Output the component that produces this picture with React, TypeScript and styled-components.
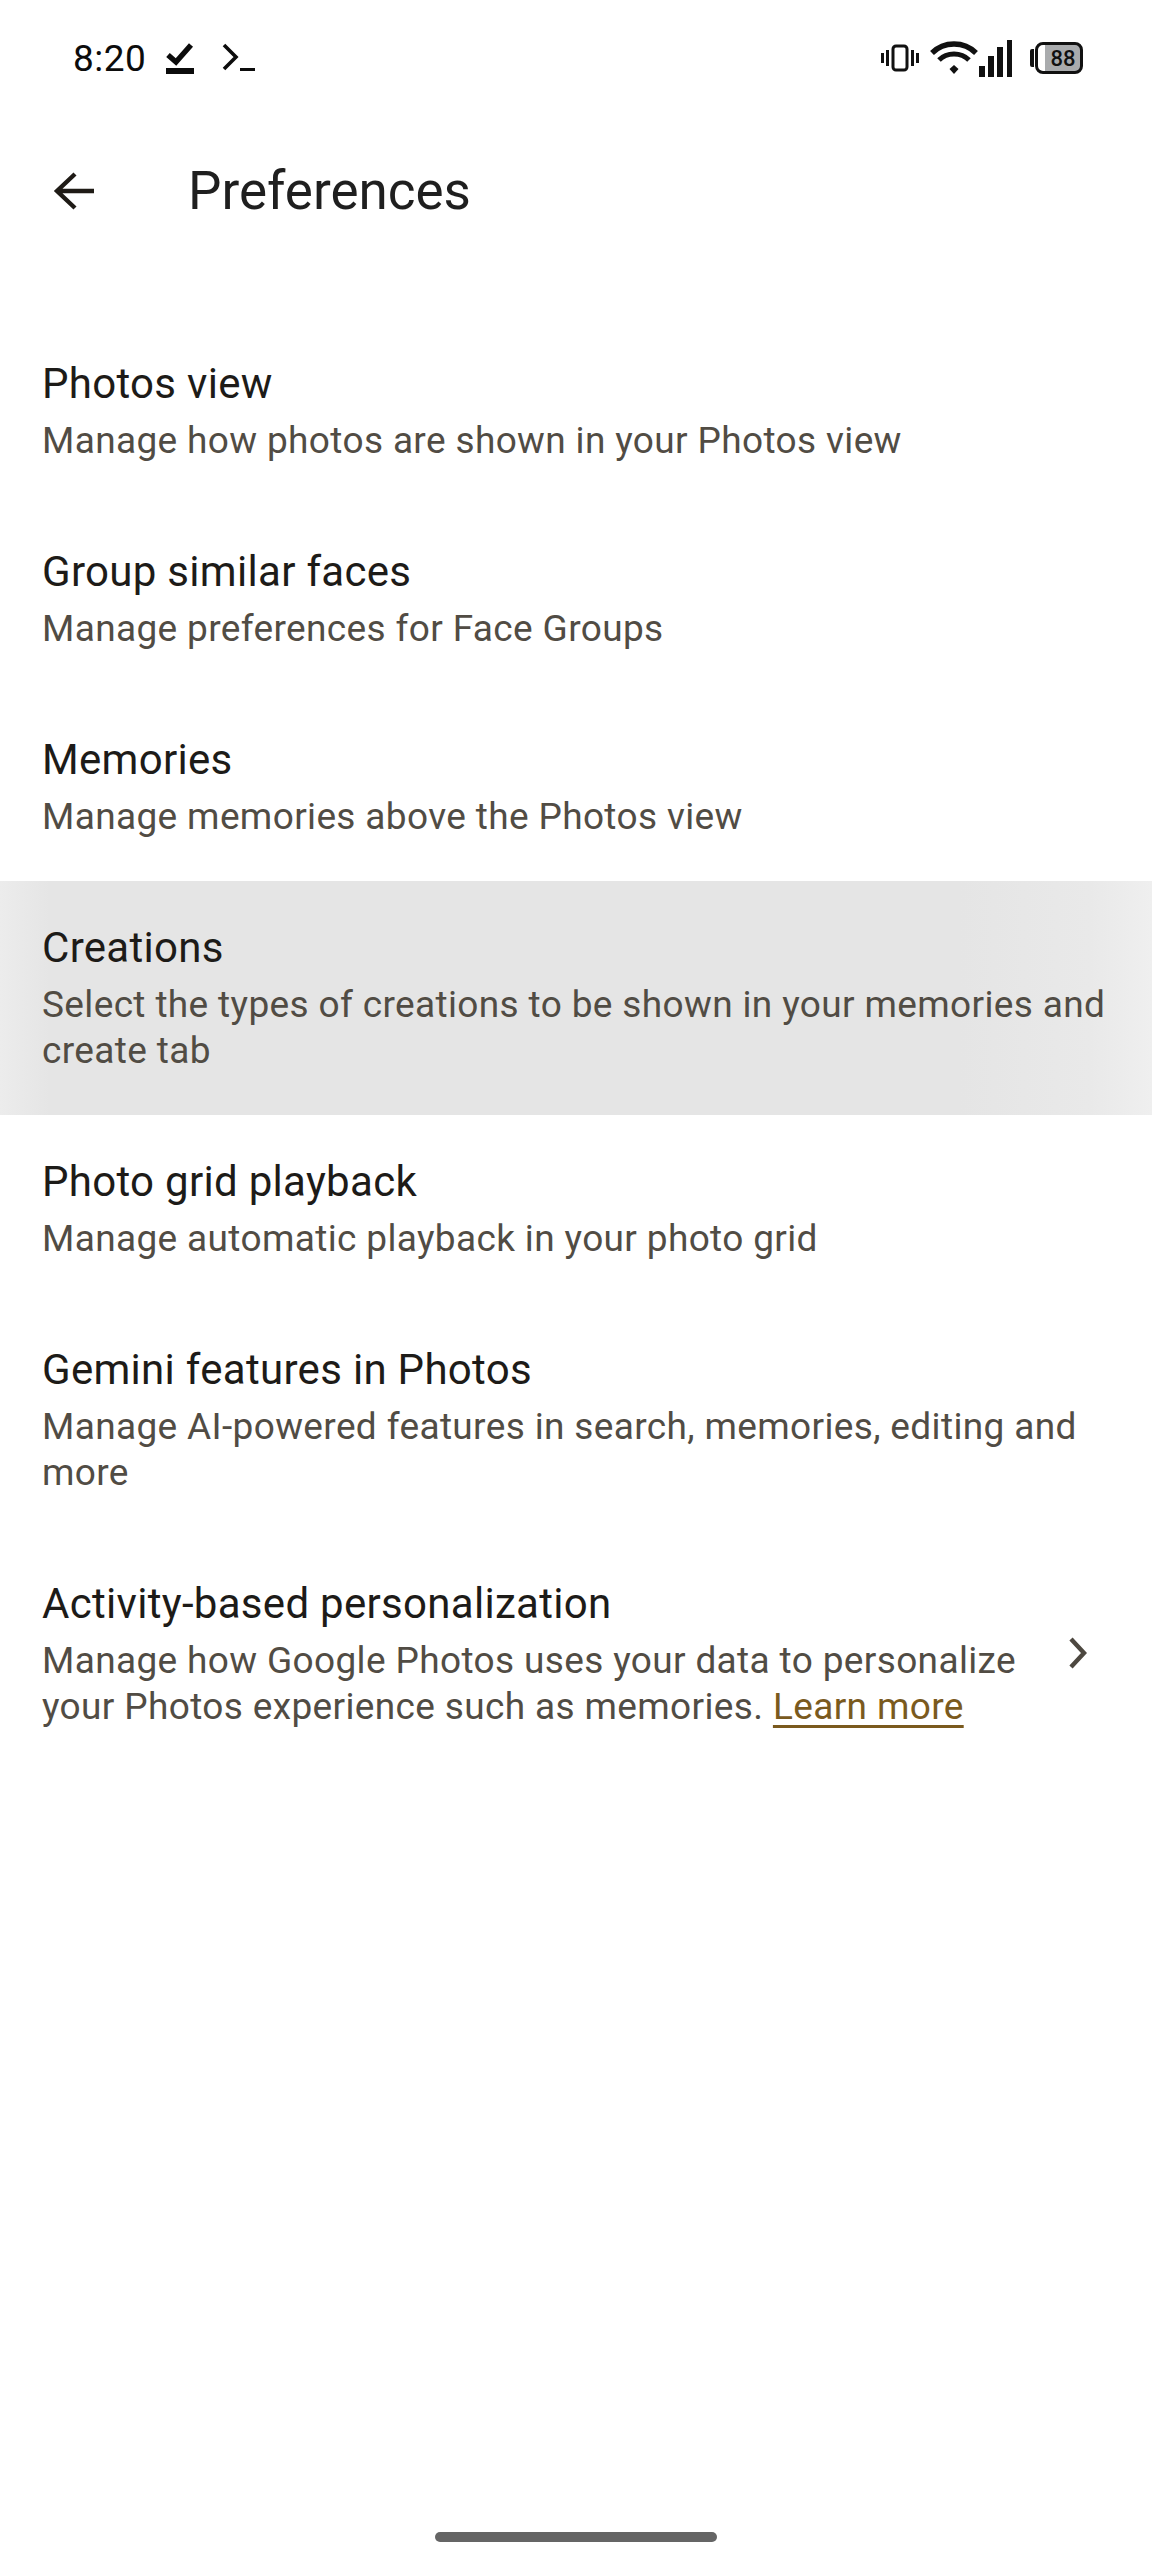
import React from 'react';
import styled, { createGlobalStyle } from 'styled-components';

const GlobalStyle = createGlobalStyle`
    html, body {
        margin: 0;
        padding: 0;
        background: #fff;
    }
`;

const Page = styled.div`
    width: 1152px;
    height: 2560px;
    display: flex;
    flex-direction: column;
    background: #fff;
    font-family: Roboto, "Noto Sans", sans-serif;
    overflow: hidden;
`;

const StatusBar = styled.div`
    height: 116px;
    padding: 0 69px 0 73px;
    display: flex;
    align-items: center;
    justify-content: space-between;
    box-sizing: border-box;
`;

const StatusGroup = styled.div`
    display: flex;
    align-items: center;
`;

const Clock = styled.span`
    font-size: 37px;
    color: #0c0c0c;
    margin-right: 20px;
    letter-spacing: 0.5px;
`;

const Battery = styled.div`
    position: relative;
    width: 48px;
    height: 32px;
    margin-left: 22px;
    border: 3px solid #111;
    border-radius: 8px;
    box-sizing: border-box;
    display: flex;
    align-items: center;
    justify-content: center;
    padding-left: 8px;
    background: linear-gradient(90deg, #fff 0 7px, #a9abad 7px);
    font-size: 22px;
    font-weight: 500;
    color: #111;

    &::before {
        content: '';
        position: absolute;
        left: -8px;
        top: 4px;
        width: 4px;
        height: 18px;
        background: #111;
        border-radius: 2px 0 0 2px;
    }
`;

const Header = styled.div`
    height: 150px;
    display: flex;
    align-items: center;
    padding-left: 52px;
`;

const BackIcon = styled.svg`
    width: 46px;
    height: 46px;
    margin-right: 90px;
`;

const PageTitle = styled.h1`
    margin: 0;
    font-size: 53px;
    font-weight: 400;
    color: #1f1f1f;
`;

const List = styled.div`
    margin-top: 51px;
    display: flex;
    flex-direction: column;
`;

const Row = styled.div<{ $active?: boolean }>`
    display: flex;
    align-items: center;
    padding: 38px 42px 41px;
    background: ${p =>
        p.$active
            ? 'linear-gradient(90deg, #ececec 0, #e5e5e5 50px, #e5e5e5 960px, #e9e9e9 1090px, #efefef 100%)'
            : 'transparent'};
`;

const RowText = styled.div`
    flex: 1;
    min-width: 0;
`;

const RowTitle = styled.div`
    font-size: 42px;
    line-height: 58px;
    margin-bottom: 5px;
    letter-spacing: 0.3px;
    color: #1d1b18;
`;

const RowDesc = styled.div`
    font-size: 37px;
    line-height: 46px;
    letter-spacing: 0.36px;
    color: #514c44;
`;

const LearnMore = styled.a`
    color: #7a5a1e;
    text-decoration: underline;
    text-underline-offset: 6px;
`;

const Chevron = styled.svg`
    width: 30px;
    height: 40px;
    margin: 0 17px 0 9px;
    flex-shrink: 0;
`;

const HomeBar = styled.div`
    width: 282px;
    height: 10px;
    border-radius: 5px;
    background: #656565;
    margin: auto auto 18px;
`;

const rows = [
    { title: 'Photos view', desc: 'Manage how photos are shown in your Photos view' },
    { title: 'Group similar faces', desc: 'Manage preferences for Face Groups' },
    { title: 'Memories', desc: 'Manage memories above the Photos view' },
    { title: 'Creations', desc: 'Select the types of creations to be shown in your memories and create tab', active: true },
    { title: 'Photo grid playback', desc: 'Manage automatic playback in your photo grid' },
    { title: 'Gemini features in Photos', desc: 'Manage AI-powered features in search, memories, editing and more' },
];

const App: React.FC = () => {
    return (
        <Page>
            <GlobalStyle />
            <StatusBar>
                <StatusGroup>
                    <Clock>8:20</Clock>
                    <svg width="28" height="34" viewBox="0 0 28 34">
                        <path d="M2 14 L10 21 L25 4" fill="none" stroke="#0c0c0c" strokeWidth="5.4" />
                        <rect x="0" y="27" width="28" height="6" fill="#0c0c0c" />
                    </svg>
                    <svg width="34" height="30" viewBox="0 0 34 30" style={{ marginLeft: 28 }}>
                        <path d="M2 2 L14 14 L2 26" fill="none" stroke="#0c0c0c" strokeWidth="3.6" />
                        <rect x="18" y="25" width="15" height="3" fill="#0c0c0c" />
                    </svg>
                </StatusGroup>
                <StatusGroup>
                    <svg width="38" height="28" viewBox="0 0 38 28">
                        <rect x="12" y="2" width="14" height="24" rx="3" fill="none" stroke="#111" strokeWidth="3" />
                        <rect x="0" y="9" width="3" height="10" fill="#111" />
                        <rect x="5" y="6" width="3" height="16" fill="#111" />
                        <rect x="30" y="6" width="3" height="16" fill="#111" />
                        <rect x="35" y="9" width="3" height="10" fill="#111" />
                    </svg>
                    <svg width="48" height="34" viewBox="0 0 48 34" style={{ marginLeft: 11 }}>
                        <path d="M2 12 C14 0 34 0 46 12" fill="none" stroke="#111" strokeWidth="5.4" />
                        <path d="M9 19 C17 11 31 11 39 19" fill="none" stroke="#111" strokeWidth="5" />
                        <path d="M19.5 28 L24 24 L28.5 28 L24 33 Z" fill="#111" />
                    </svg>
                    <svg width="34" height="37" viewBox="0 0 34 37" style={{ marginLeft: 1 }}>
                        <rect x="0" y="26" width="6" height="11" fill="#111" />
                        <rect x="9" y="16" width="6" height="21" fill="#111" />
                        <rect x="18" y="7" width="6" height="30" fill="#111" />
                        <rect x="28" y="0" width="5" height="37" fill="#111" />
                    </svg>
                    <Battery>88</Battery>
                </StatusGroup>
            </StatusBar>

            <Header>
                <BackIcon viewBox="0 0 46 46">
                    <path d="M42 23 H6 M23 6 L5 23 L23 40" fill="none" stroke="#1f1b16" strokeWidth="4.4" />
                </BackIcon>
                <PageTitle>Preferences</PageTitle>
            </Header>

            <List>
                {rows.map(row => (
                    <Row key={row.title} $active={row.active}>
                        <RowText>
                            <RowTitle>{row.title}</RowTitle>
                            <RowDesc>{row.desc}</RowDesc>
                        </RowText>
                    </Row>
                ))}
                <Row>
                    <RowText>
                        <RowTitle>Activity-based personalization</RowTitle>
                        <RowDesc>
                            Manage how Google Photos uses your data to personalize your Photos experience such as memories.{' '}
                            <LearnMore>Learn more</LearnMore>
                        </RowDesc>
                    </RowText>
                    <Chevron viewBox="0 0 30 40">
                        <path d="M8 6 L21 20 L8 34" fill="none" stroke="#4d4840" strokeWidth="4.4" />
                    </Chevron>
                </Row>
            </List>

            <HomeBar />
        </Page>
    );
};

export default App;
